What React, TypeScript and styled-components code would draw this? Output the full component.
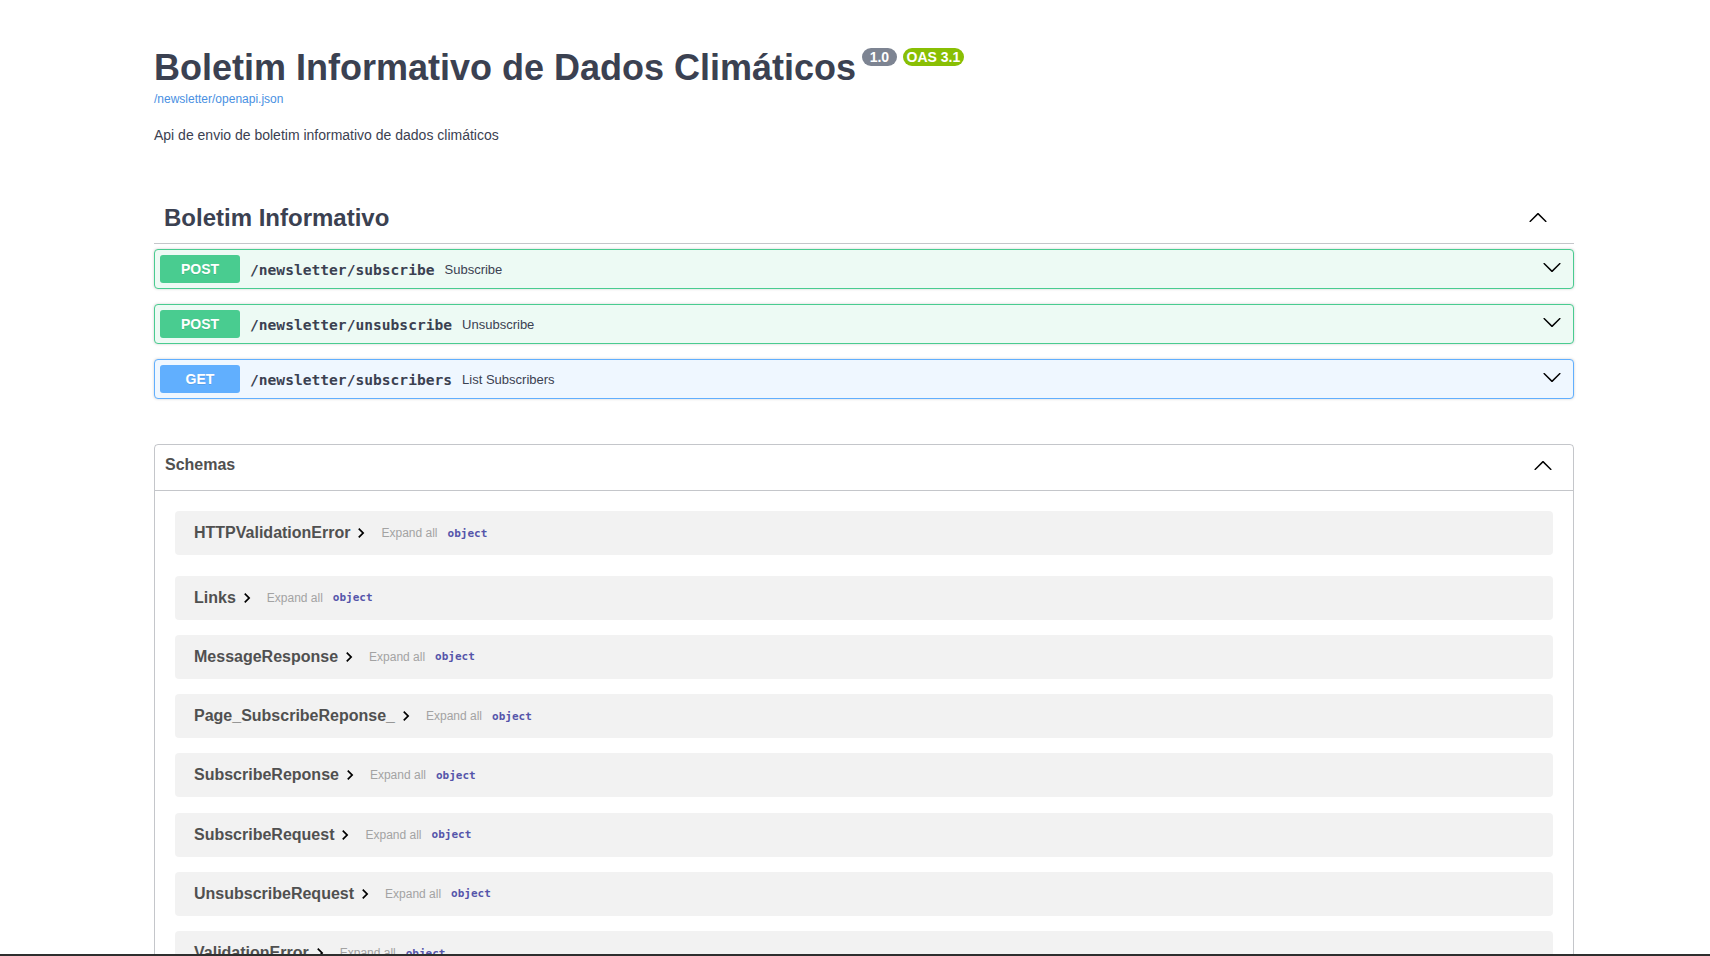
import React from "react";
import styled, { createGlobalStyle } from "styled-components";

const GlobalStyle = createGlobalStyle`
  html, body {
    margin: 0;
    padding: 0;
    background: #ffffff;
    overflow: hidden;
  }
  body {
    font-family: "Liberation Sans", Arial, sans-serif;
    color: #3b4151;
  }
`;

const Page = styled.div`
  display: flex;
  flex-direction: column;
  width: 1420px;
  margin-left: 154px;
`;

const Info = styled.section`
  display: flex;
  flex-direction: column;
  margin: 47px 0 50px;
`;

const TitleRow = styled.h2`
  display: flex;
  align-items: flex-start;
  margin: 0;
  font-size: 36px;
  line-height: 41px;
  font-weight: 700;
  color: #3b4151;
`;

const Badge = styled.span<{ $bg: string; $px: number }>`
  display: inline-block;
  margin: 1px 0 0 6px;
  padding: 1px ${(p) => p.$px}px;
  border-radius: 57px;
  background: ${(p) => p.$bg};
  color: #ffffff;
  font-size: 14px;
  line-height: 16px;
  font-weight: 700;
`;

const BaseUrl = styled.a`
  align-self: flex-start;
  margin-top: 4px;
  font-size: 12px;
  line-height: 14px;
  color: #4990e2;
  text-decoration: none;
`;

const Description = styled.p`
  margin: 21px 0 0;
  font-size: 14px;
  line-height: 16px;
  color: #3b4151;
`;

const TagSection = styled.section`
  display: flex;
  flex-direction: column;
`;

const TagHeader = styled.div`
  display: flex;
  align-items: center;
  height: 30px;
  padding: 10px 26px 10px 10px;
  margin-bottom: 5px;
  border-bottom: 1px solid rgba(59, 65, 81, 0.3);
`;

const TagTitle = styled.h3`
  flex: 1;
  margin: 0;
  font-size: 24px;
  line-height: 30px;
  font-weight: 700;
  color: #3b4151;
`;

const ArrowBox = styled.span<{ $pl?: number; $pr?: number; $up?: number }>`
  display: flex;
  align-items: center;
  padding: 0 ${(p) => p.$pr ?? 0}px 0 ${(p) => p.$pl ?? 0}px;
  margin-top: -${(p) => p.$up ?? 0}px;
`;

const Opblock = styled.div<{ $border: string; $bg: string }>`
  display: flex;
  align-items: center;
  padding: 5px;
  margin-bottom: 15px;
  border: 1px solid ${(p) => p.$border};
  border-radius: 4px;
  background: ${(p) => p.$bg};
  box-shadow: 0 0 3px rgba(0, 0, 0, 0.19);
`;

const Method = styled.span<{ $bg: string }>`
  display: flex;
  align-items: center;
  justify-content: center;
  width: 80px;
  height: 28px;
  border-radius: 3px;
  background: ${(p) => p.$bg};
  color: #ffffff;
  font-size: 14px;
  font-weight: 700;
  text-shadow: 0 1px 0 rgba(0, 0, 0, 0.1);
`;

const Path = styled.span`
  padding: 0 10px;
  font-family: "DejaVu Sans Mono", "Liberation Mono", monospace;
  font-size: 14.6px;
  font-weight: 700;
  color: #3b4151;
`;

const Summary = styled.span`
  flex: 1;
  font-size: 13px;
  color: #3b4151;
`;

const Models = styled.section`
  display: flex;
  flex-direction: column;
  margin-top: 30px;
  border: 1px solid rgba(59, 65, 81, 0.3);
  border-radius: 4px;
`;

const ModelsHeader = styled.div`
  display: flex;
  align-items: center;
  height: 26px;
  padding: 7px 20px 12px 10px;
  border-bottom: 1px solid rgba(59, 65, 81, 0.3);
`;

const ModelsTitle = styled.h4`
  flex: 1;
  margin: 0;
  font-size: 16px;
  font-weight: 700;
  color: #505050;
`;

const ModelList = styled.div`
  display: flex;
  flex-direction: column;
  padding: 20px;
`;

const ModelRow = styled.div`
  display: flex;
  align-items: center;
  height: 44px;
  padding-left: 19px;
  margin-bottom: 15.3px;
  border-radius: 4px;
  background: rgba(0, 0, 0, 0.05);
  &:first-child {
    margin-bottom: 20.5px;
  }
`;

const ModelTitle = styled.span`
  font-size: 16px;
  font-weight: 700;
  color: #505050;
`;

const Toggle = styled.span`
  display: flex;
  width: 20px;
  height: 20px;
  margin-left: 1px;
`;

const ExpandAll = styled.span`
  margin-left: 10px;
  font-size: 12px;
  color: #a3a3a3;
`;

const PropType = styled.span`
  margin-left: 10px;
  font-family: "DejaVu Sans Mono", "Liberation Mono", monospace;
  font-size: 11px;
  font-weight: 700;
  color: #55a;
`;

const BottomEdge = styled.div`
  position: fixed;
  left: 0;
  right: 0;
  bottom: 0;
  height: 2px;
  background: #2e2e2e;
`;

const ArrowDown = () => (
  <svg width="20" height="20" viewBox="0 0 20 20">
    <path
      fill="#000"
      d="M17.418 6.109c.272-.268.709-.268.979 0s.271.701 0 .969l-7.908 7.83c-.27.268-.707.268-.979 0l-7.908-7.830c-.27-.268-.27-.701 0-.969.271-.268.709-.268.979 0L10 13.25l7.418-7.141z"
    />
  </svg>
);

const ArrowUp = () => (
  <svg width="20" height="20" viewBox="0 0 20 20">
    <path
      fill="#000"
      d="M17.418 14.908c.272.268.709.268.979 0s.271-.701 0-.969l-7.908-7.83c-.27-.268-.707-.268-.979 0l-7.908 7.83c-.27.268-.27.701 0 .969.271.268.709.268.979 0L10 7.767l7.418 7.141z"
    />
  </svg>
);

const Chevron = () => (
  <Toggle>
    <svg width="20" height="20" viewBox="0 0 24 24">
      <path fill="#000" d="M10 6L8.59 7.41 13.17 12l-4.58 4.59L10 18l6-6z" />
    </svg>
  </Toggle>
);

const ops = [
  { method: "POST", path: "/newsletter/subscribe", summary: "Subscribe" },
  { method: "POST", path: "/newsletter/unsubscribe", summary: "Unsubscribe" },
  { method: "GET", path: "/newsletter/subscribers", summary: "List Subscribers" },
];

const colors: Record<string, { main: string; bg: string }> = {
  POST: { main: "#49cc90", bg: "#edfaf4" },
  GET: { main: "#61affe", bg: "#eff7ff" },
};

const models = [
  "HTTPValidationError",
  "Links",
  "MessageResponse",
  "Page_SubscribeReponse_",
  "SubscribeReponse",
  "SubscribeRequest",
  "UnsubscribeRequest",
  "ValidationError",
];

export default function App() {
  return (
    <>
      <GlobalStyle />
      <Page>
        <Info>
          <TitleRow>
            Boletim Informativo de Dados Climáticos
            <Badge $bg="#7d8492" $px={7.5}>1.0</Badge>
            <Badge $bg="#89bf04" $px={4}>OAS 3.1</Badge>
          </TitleRow>
          <BaseUrl href="#">/newsletter/openapi.json</BaseUrl>
          <Description>Api de envio de boletim informativo de dados climáticos</Description>
        </Info>

        <TagSection>
          <TagHeader>
            <TagTitle>Boletim Informativo</TagTitle>
            <ArrowBox $up={3}>
              <ArrowUp />
            </ArrowBox>
          </TagHeader>
          {ops.map((op) => (
            <Opblock key={op.path} $border={colors[op.method].main} $bg={colors[op.method].bg}>
              <Method $bg={colors[op.method].main}>{op.method}</Method>
              <Path>{op.path}</Path>
              <Summary>{op.summary}</Summary>
              <ArrowBox $pl={10} $pr={6} $up={5}>
                <ArrowDown />
              </ArrowBox>
            </Opblock>
          ))}
        </TagSection>

        <Models>
          <ModelsHeader>
            <ModelsTitle>Schemas</ModelsTitle>
            <ArrowBox>
              <ArrowUp />
            </ArrowBox>
          </ModelsHeader>
          <ModelList>
            {models.map((m) => (
              <ModelRow key={m}>
                <ModelTitle>{m}</ModelTitle>
                <Chevron />
                <ExpandAll>Expand all</ExpandAll>
                <PropType>object</PropType>
              </ModelRow>
            ))}
          </ModelList>
        </Models>
      </Page>
      <BottomEdge />
    </>
  );
}
